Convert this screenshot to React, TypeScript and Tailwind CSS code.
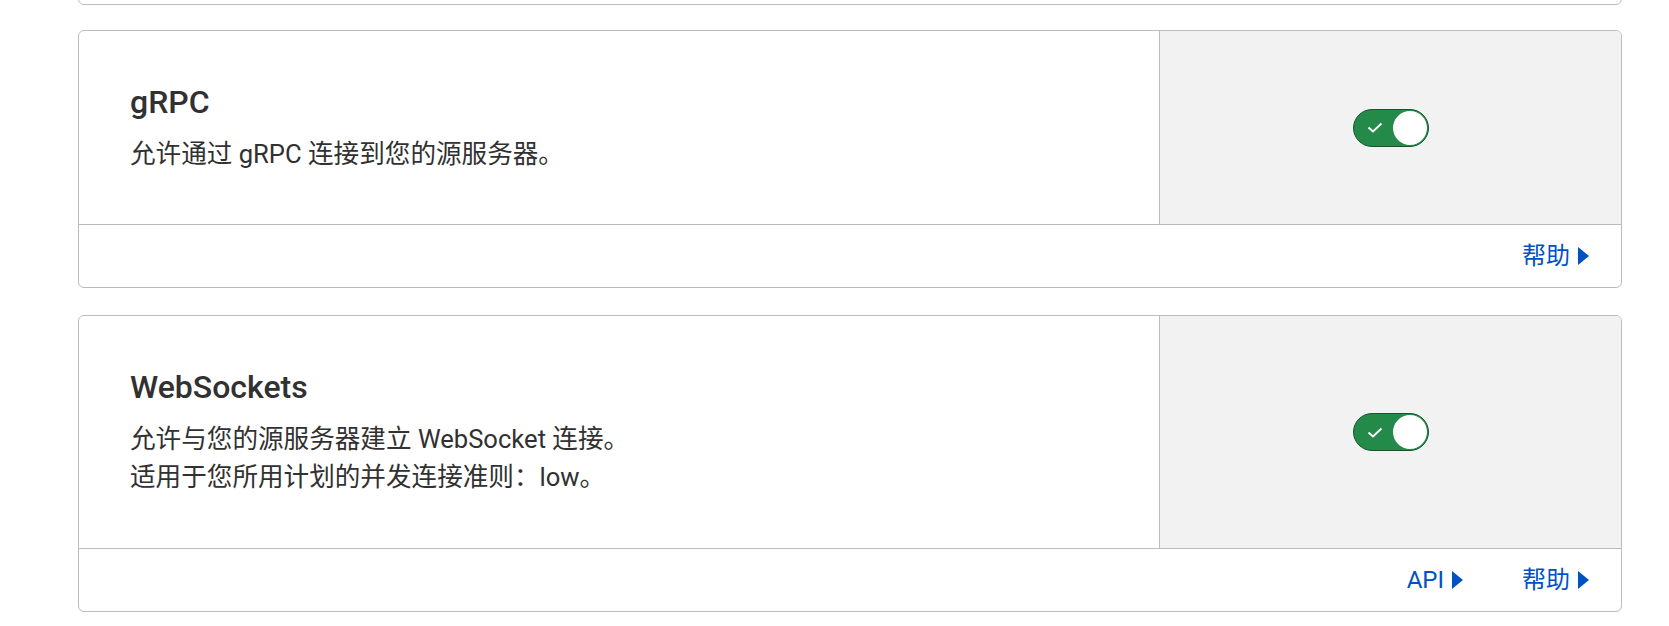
const font = '[font-family:Roboto,"Noto_Sans_CJK_SC",sans-serif]'

type Link = { label: string }

const cards = [
  {
    id: 'grpc',
    title: 'gRPC',
    lines: ['允许通过 gRPC 连接到您的源服务器。'],
    links: [{ label: '帮助' }],
    panel: 'h-[193px]',
  },
  {
    id: 'websockets',
    title: 'WebSockets',
    lines: ['允许与您的源服务器建立 WebSocket 连接。', '适用于您所用计划的并发连接准则：low。'],
    links: [{ label: 'API' }, { label: '帮助' }],
    panel: 'h-[232px]',
  },
]

function Toggle() {
  return (
    <button
      aria-label="toggle"
      className="flex h-[38px] w-[76px] items-center justify-between rounded-full border border-[#17562f] bg-[#238a4a] pl-[13px] pr-[1px]"
    >
      <svg width="16" height="11" viewBox="0 0 16 11" fill="none">
        <path d="M1.5 5.5L6 9.5L14.5 1.5" stroke="white" strokeWidth="2" />
      </svg>
      <span className="h-[34px] w-[34px] rounded-full bg-white" />
    </button>
  )
}

function FooterLink({ label }: Link) {
  return (
    <a href="#" className="flex items-center gap-[8px] text-[24px] leading-[30px] text-[#0051c3]">
      {label}
      <svg width="11" height="18" viewBox="0 0 11 18">
        <polygon points="0,0 11,9 0,18" fill="#0051c3" />
      </svg>
    </a>
  )
}

export default function App() {
  return (
    <div className={`min-h-[626px] overflow-hidden bg-white ${font} text-[#313131]`}>
      <div className="ml-[78px] w-[1544px]">
        <div className="-mt-[60px] h-[65px] rounded-[6px] border border-[#bcbcbc]" />
        {cards.map((c, i) => (
          <section
            key={c.id}
            className={`${i === 0 ? 'mt-[25px]' : 'mt-[27px]'} overflow-hidden rounded-[6px] border border-[#bcbcbc]`}
          >
            <div className={`flex ${c.panel}`}>
              <div className="flex flex-1 flex-col justify-center pl-[51px]">
                <h3 className="text-[32px] font-medium leading-[38px]">{c.title}</h3>
                <div className="mt-[14px] text-[25.6px] leading-[38px]">
                  {c.lines.map((l) => (
                    <p key={l}>{l}</p>
                  ))}
                </div>
              </div>
              <div className="flex w-[462px] items-center justify-center border-l border-[#bcbcbc] bg-[#f2f2f2]">
                <Toggle />
              </div>
            </div>
            <div className="flex h-[63px] items-center justify-end gap-[59px] border-t border-[#bcbcbc] pr-[32px]">
              {c.links.map((l) => (
                <FooterLink key={l.label} label={l.label} />
              ))}
            </div>
          </section>
        ))}
      </div>
    </div>
  )
}
